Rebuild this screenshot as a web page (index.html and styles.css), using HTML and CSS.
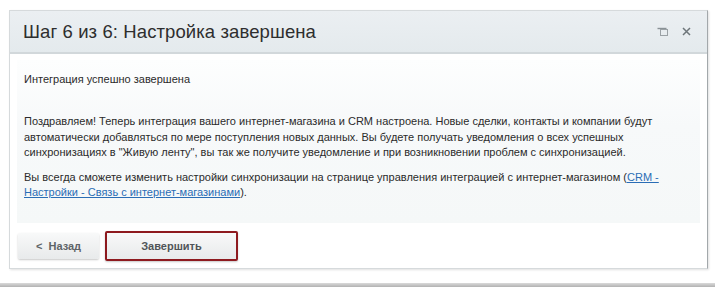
FILE: index.html
```html
<!DOCTYPE html>
<html lang="ru">
<head>
<meta charset="utf-8">
<title>Шаг 6 из 6</title>
<link rel="stylesheet" href="styles.css">
</head>
<body>
<div class="page">
  <div class="dialog">
    <div class="dialog-head">
      <div class="dialog-title">Шаг 6 из 6: Настройка завершена</div>
      <div class="dialog-tools">
        <svg class="tool-icon" width="12" height="10" viewBox="0 0 12 10">
          <path d="M0.5 1.5H9.5" stroke="#8a9296" stroke-width="1.4" fill="none"/>
          <rect x="3.5" y="2.5" width="7" height="6" stroke="#9aa1a5" stroke-width="1" fill="none"/>
        </svg>
        <svg class="tool-icon" width="9" height="9" viewBox="0 0 9 9">
          <path d="M1 1L8 8M8 1L1 8" stroke="#6e767a" stroke-width="1.5" fill="none"/>
        </svg>
      </div>
    </div>
    <div class="dialog-body">
      <div class="panel">
        <p class="status">Интеграция успешно завершена</p>
        <p class="text">Поздравляем! Теперь интеграция вашего интернет-магазина и CRM настроена. Новые сделки, контакты и компании будут автоматически добавляться по мере поступления новых данных. Вы будете получать уведомления о всех успешных синхронизациях в "Живую ленту", вы так же получите уведомление и при возникновении проблем с синхронизацией.</p>
        <p class="text second">Вы всегда сможете изменить настройки синхронизации на странице управления интеграцией с интернет-магазином (<a href="#" class="link">CRM -</a> <a href="#" class="link">Настройки - Связь с интернет-магазинами</a>).</p>
      </div>
      <div class="buttons">
        <button class="btn btn-back">&lt;&nbsp; Назад</button>
        <button class="btn btn-finish">Завершить</button>
      </div>
    </div>
  </div>
  <div class="bottom-band"></div>
</div>
</body>
</html>
```
FILE: styles.css
```css
html, body {
  margin: 0;
  padding: 0;
  background: #ffffff;
}
body {
  width: 715px;
  height: 287px;
  overflow: hidden;
  font-family: "Liberation Sans", Arial, sans-serif;
  color: #2b2b2b;
}
.page {
  padding: 10px 7px 0 9px;
  display: flex;
  flex-direction: column;
}
.dialog {
  width: 697px;
  border: 1px solid #d6dadc;
  border-right-color: #a3a8ab;
  background: #fff;
  box-shadow: 1px 1px 2px rgba(0,0,0,0.12);
}
.dialog-head {
  height: 41px;
  background: linear-gradient(#ebeff2, #e4eaed);
  border-bottom: 2px solid #d2d8db;
  display: flex;
  align-items: center;
  justify-content: space-between;
  padding: 0 16px 0 13px;
}
.dialog-title {
  font-size: 18.5px;
  color: #2e2e2e;
  letter-spacing: 0.1px;
}
.dialog-tools {
  display: flex;
  align-items: center;
  gap: 13px;
}
.dialog-body {
  padding: 6px 7px 7px 7px;
}
.panel {
  background: linear-gradient(#fdfefe, #f7f9fa 40%, #f5f8f8);
  padding: 12px 7px 22px 7px;
}
.panel p {
  margin: 0;
  font-size: 11px;
  line-height: 15.3px;
}
.status {
  color: #2b2b2b;
}
.text {
  margin-top: 27px !important;
}
.text.second {
  margin-top: 10px !important;
}
.link {
  color: #2a6db5;
  text-decoration: underline;
}
.buttons {
  display: flex;
  align-items: center;
  gap: 6px;
  margin-top: 8px;
  padding-left: 1px;
}
.btn {
  font-family: "Liberation Sans", Arial, sans-serif;
  font-size: 11px;
  font-weight: bold;
  color: #5e6467;
  height: 26px;
  border: none;
  border-radius: 2px;
  background: linear-gradient(#f8f9f9, #e8eaeb);
  box-shadow: 0 1px 2px rgba(0,0,0,0.22);
  padding: 0;
  cursor: pointer;
}
.btn-back {
  width: 81px;
}
.btn-finish {
  width: 133px;
  height: 30px;
  border: 2px solid #8e1a1f;
  border-radius: 2px;
  color: #505558;
}
.bottom-band {
  margin: 14px -7px 0 -9px;
  height: 6px;
  background: linear-gradient(#dadada, #9e9e9e);
}
```
